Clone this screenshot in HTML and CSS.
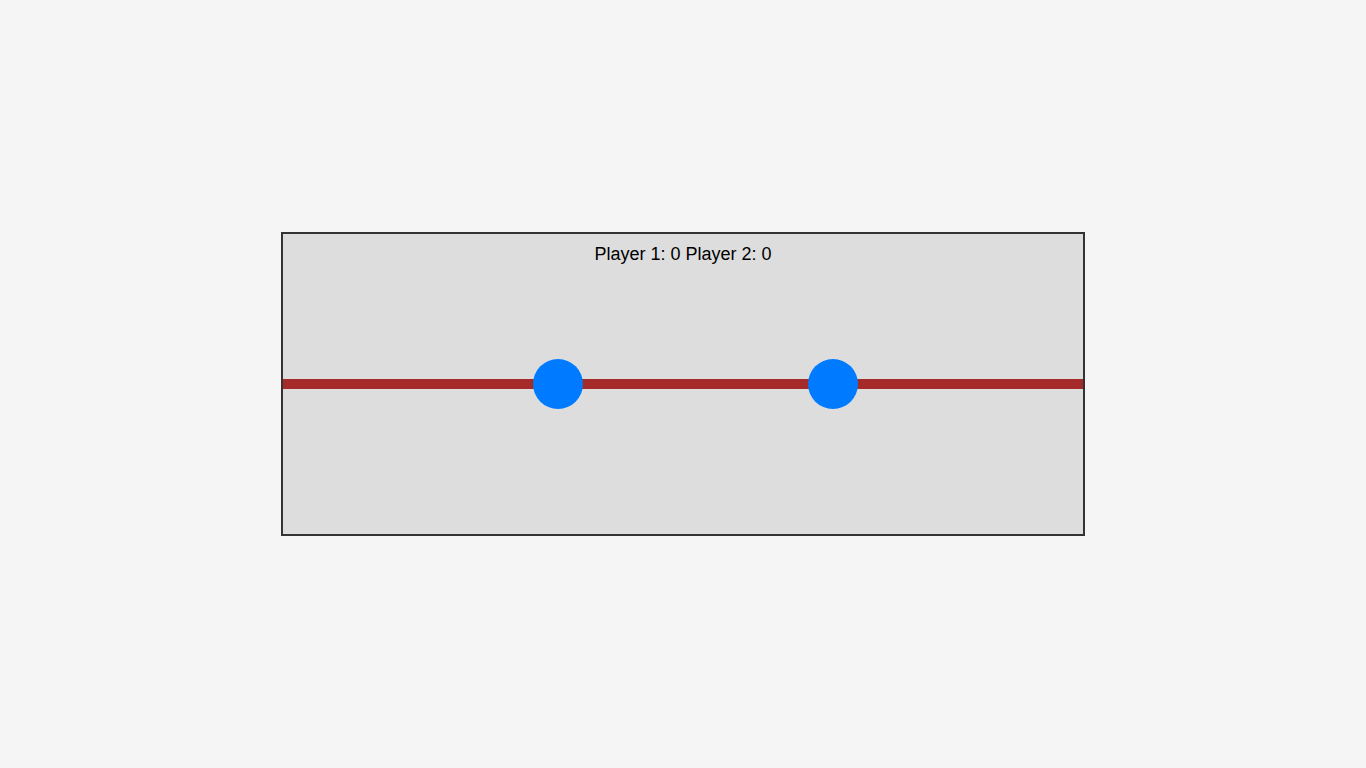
FILE: index.html
```html
<!DOCTYPE html>
<html lang="en">
<head>
<meta charset="utf-8">
<title>Game</title>
<link rel="stylesheet" href="styles.css">
</head>
<body>
<main class="stage">
  <div class="board">
    <div class="score">Player 1: 0 Player 2: 0</div>
    <div class="rope"></div>
    <div class="ball ball-one"></div>
    <div class="ball ball-two"></div>
  </div>
</main>
</body>
</html>
```
FILE: styles.css
```css
html, body {
  margin: 0;
  padding: 0;
  height: 100%;
}
body {
  background: #f5f5f5;
  font-family: Arial, "Liberation Sans", sans-serif;
  color: #000;
}
.stage {
  height: 100vh;
  display: flex;
  align-items: center;
  justify-content: center;
}
.board {
  position: relative;
  width: 800px;
  height: 300px;
  background: #dddddd;
  border: 2px solid #333333;
}
.score {
  padding-top: 10px;
  text-align: center;
  font-size: 18px;
  line-height: normal;
}
.rope {
  position: absolute;
  left: 0;
  right: 0;
  top: 145px;
  height: 10px;
  background: #a52a2a;
}
.ball {
  position: absolute;
  top: 125px;
  width: 50px;
  height: 50px;
  border-radius: 50%;
  background: #007bff;
}
.ball-one { left: 250px; }
.ball-two { left: 525px; }
```
